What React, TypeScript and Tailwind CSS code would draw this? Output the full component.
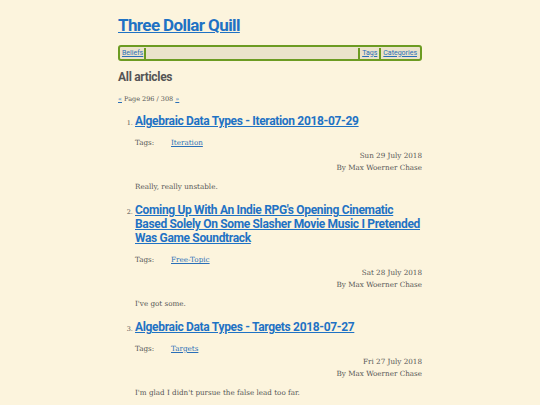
const articles = [
  {
    title: 'Algebraic Data Types - Iteration 2018-07-29',
    tag: 'Iteration',
    date: 'Sun 29 July 2018',
    excerpt: 'Really, really unstable.',
  },
  {
    title: "Coming Up With An Indie RPG's Opening Cinematic Based Solely On Some Slasher Movie Music I Pretended Was Game Soundtrack",
    tag: 'Free-Topic',
    date: 'Sat 28 July 2018',
    excerpt: "I've got some.",
  },
  {
    title: 'Algebraic Data Types - Targets 2018-07-27',
    tag: 'Targets',
    date: 'Fri 27 July 2018',
    excerpt: "I'm glad I didn't pursue the false lead too far.",
  },
];

const heading = { fontFamily: 'Roboto, "Noto Sans", sans-serif' };
const body = { fontFamily: '"DejaVu Serif", "Liberation Serif", serif' };

export default function App() {
  return (
    <div className="min-h-[405px] bg-[#fcf4dd] text-[#555]" style={body}>
      <div className="mx-auto w-[304px] pt-[14px]">
        <h1 className="text-[17px] font-bold leading-[22px] tracking-[-0.6px]" style={heading}>
          <a href="#" className="text-[#1f72c4] underline">Three Dollar Quill</a>
        </h1>

        <nav
          className="mt-[9px] flex h-[16px] items-center rounded-[3px] border-2 border-[#6c9b22] bg-[#ebe3cb] px-[1px] text-[7px] leading-none"
          style={heading}
        >
          <a href="#" className="px-[1px] text-[#2a6fb8] underline">Beliefs</a>
          <span className="h-[11px] w-[2px] bg-[#6c9b22]" />
          <span className="flex-1" />
          <span className="h-[11px] w-[2px] bg-[#6c9b22]" />
          <a href="#" className="px-[2px] text-[#2a6fb8] underline">Tags</a>
          <span className="h-[11px] w-[2px] bg-[#6c9b22]" />
          <a href="#" className="px-[2px] text-[#2a6fb8] underline">Categories</a>
        </nav>

        <h2 className="mt-[8px] text-[12px] font-bold leading-[16px] tracking-[-0.3px] text-[#555]" style={heading}>
          All articles
        </h2>

        <p className="mt-[10px] text-[6.5px] leading-[9px]">
          <a href="#" className="text-[#2a6fb8] underline">«</a> Page 296 / 308{' '}
          <a href="#" className="text-[#2a6fb8] underline">»</a>
        </p>

        <ol className="mt-[10px] list-decimal pl-[17px] text-[6.5px] marker:text-[#555]">
          {articles.map((a) => (
            <li key={a.title} className="pb-[10px]">
              <h3 className="text-[12px] font-bold leading-[14px] tracking-[-0.33px]" style={heading}>
                <a href="#" className="text-[#1f72c4] underline">{a.title}</a>
              </h3>
              <div className="mt-[10px] flex text-[7.2px] leading-[10px]">
                <span className="w-[36px]">Tags:</span>
                <a href="#" className="text-[#2a6fb8] underline">{a.tag}</a>
              </div>
              <div className="mt-[2px] text-right text-[7.2px] leading-[12px]">
                <div>{a.date}</div>
                <div>By Max Woerner Chase</div>
              </div>
              <p className="mt-[7px] text-[7.2px] leading-[12px]">{a.excerpt}</p>
            </li>
          ))}
        </ol>
      </div>
    </div>
  );
}
